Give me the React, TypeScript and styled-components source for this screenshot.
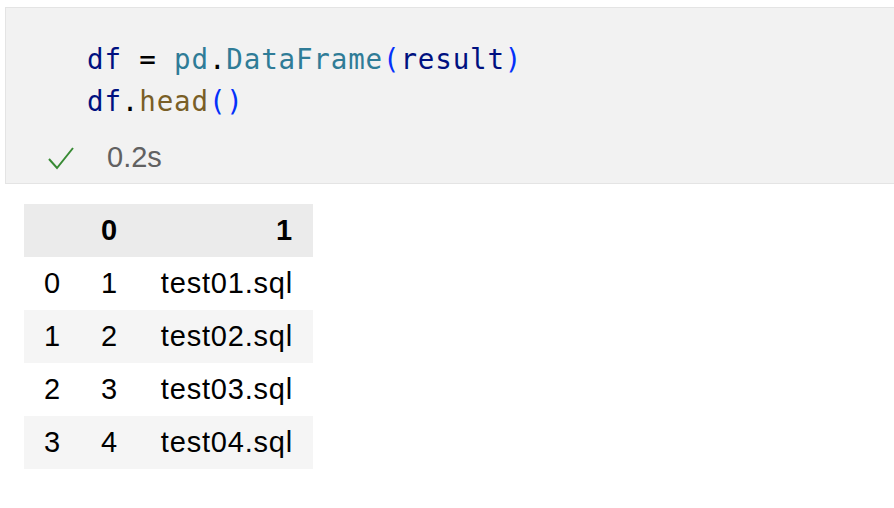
import React from 'react';
import styled, { createGlobalStyle } from 'styled-components';

const GlobalStyle = createGlobalStyle`
  html, body {
    margin: 0;
    padding: 0;
    background: #ffffff;
  }
  body {
    overflow: hidden;
    font-family: "Liberation Sans", Arial, sans-serif;
  }
`;

const Page = styled.div`
  width: 894px;
  height: 508px;
  padding-top: 7px;
  box-sizing: border-box;
  overflow: hidden;
`;

const Cell = styled.div`
  margin-left: 5px;
  width: 900px;
  box-sizing: border-box;
  background: #f2f2f2;
  border: 1px solid #e4e4e4;
  padding: 30px 0 6px 81px;
`;

const Code = styled.pre`
  margin: 0;
  font-family: "DejaVu Sans Mono", monospace;
  font-size: 27.5px;
  letter-spacing: 0.85px;
  line-height: 42px;
  color: #000000;
`;

const Tok = styled.span<{ $c: string }>`
  color: ${(p) => p.$c};
`;

const Status = styled.div`
  display: flex;
  align-items: center;
  gap: 32px;
  margin-left: -40px;
  margin-top: 15px;
  height: 40px;
  font-size: 29px;
  color: #616161;
`;

const Check = styled.svg`
  width: 28px;
  height: 26px;
  margin-top: 1px;
`;

const Table = styled.table`
  margin: 20px 0 0 24px;
  border-collapse: collapse;
  border-spacing: 0;
  font-size: 29px;
  letter-spacing: 0.8px;
  color: #000000;
`;

const Row = styled.tr<{ $bg: string }>`
  background: ${(p) => p.$bg};
  height: 53px;
`;

const Th = styled.th<{ $w: number; $pr: number }>`
  width: ${(p) => p.$w - p.$pr}px;
  padding: 0 ${(p) => p.$pr}px 0 0;
  text-align: right;
  font-weight: bold;
`;

const Td = styled.td<{ $w: number; $pr: number }>`
  width: ${(p) => p.$w - p.$pr}px;
  padding: 0 ${(p) => p.$pr}px 0 0;
  text-align: right;
  font-weight: normal;
`;

const cols = [
  { w: 53, pr: 16 },
  { w: 57, pr: 16 },
  { w: 179, pr: 20 },
];

const rows = [
  ['0', '1', 'test01.sql'],
  ['1', '2', 'test02.sql'],
  ['2', '3', 'test03.sql'],
  ['3', '4', 'test04.sql'],
];

const C = {
  variable: '#001080',
  module: '#2f7c97',
  func: '#795e26',
  bracket: '#0431fa',
};

const App: React.FC = () => (
  <Page>
    <GlobalStyle />
    <Cell>
      <Code>
        <Tok $c={C.variable}>df</Tok> = <Tok $c={C.module}>pd</Tok>.
        <Tok $c={C.module}>DataFrame</Tok>
        <Tok $c={C.bracket}>(</Tok>
        <Tok $c={C.variable}>result</Tok>
        <Tok $c={C.bracket}>)</Tok>
        {'\n'}
        <Tok $c={C.variable}>df</Tok>.<Tok $c={C.func}>head</Tok>
        <Tok $c={C.bracket}>()</Tok>
      </Code>
      <Status>
        <Check viewBox="0 0 28 26">
          <polyline
            points="2,14 10,23 26,3"
            fill="none"
            stroke="#388a34"
            strokeWidth="2"
            strokeLinejoin="miter"
          />
        </Check>
        <span>0.2s</span>
      </Status>
    </Cell>
    <Table>
      <thead>
        <Row $bg="#ebebeb">
          <Th $w={cols[0].w} $pr={cols[0].pr} />
          <Th $w={cols[1].w} $pr={cols[1].pr}>0</Th>
          <Th $w={cols[2].w} $pr={cols[2].pr}>1</Th>
        </Row>
      </thead>
      <tbody>
        {rows.map((r, i) => (
          <Row key={r[0]} $bg={i % 2 === 1 ? '#f5f5f5' : '#ffffff'}>
            {r.map((v, j) => (
              <Td key={j} $w={cols[j].w} $pr={cols[j].pr}>{v}</Td>
            ))}
          </Row>
        ))}
      </tbody>
    </Table>
  </Page>
);

export default App;
